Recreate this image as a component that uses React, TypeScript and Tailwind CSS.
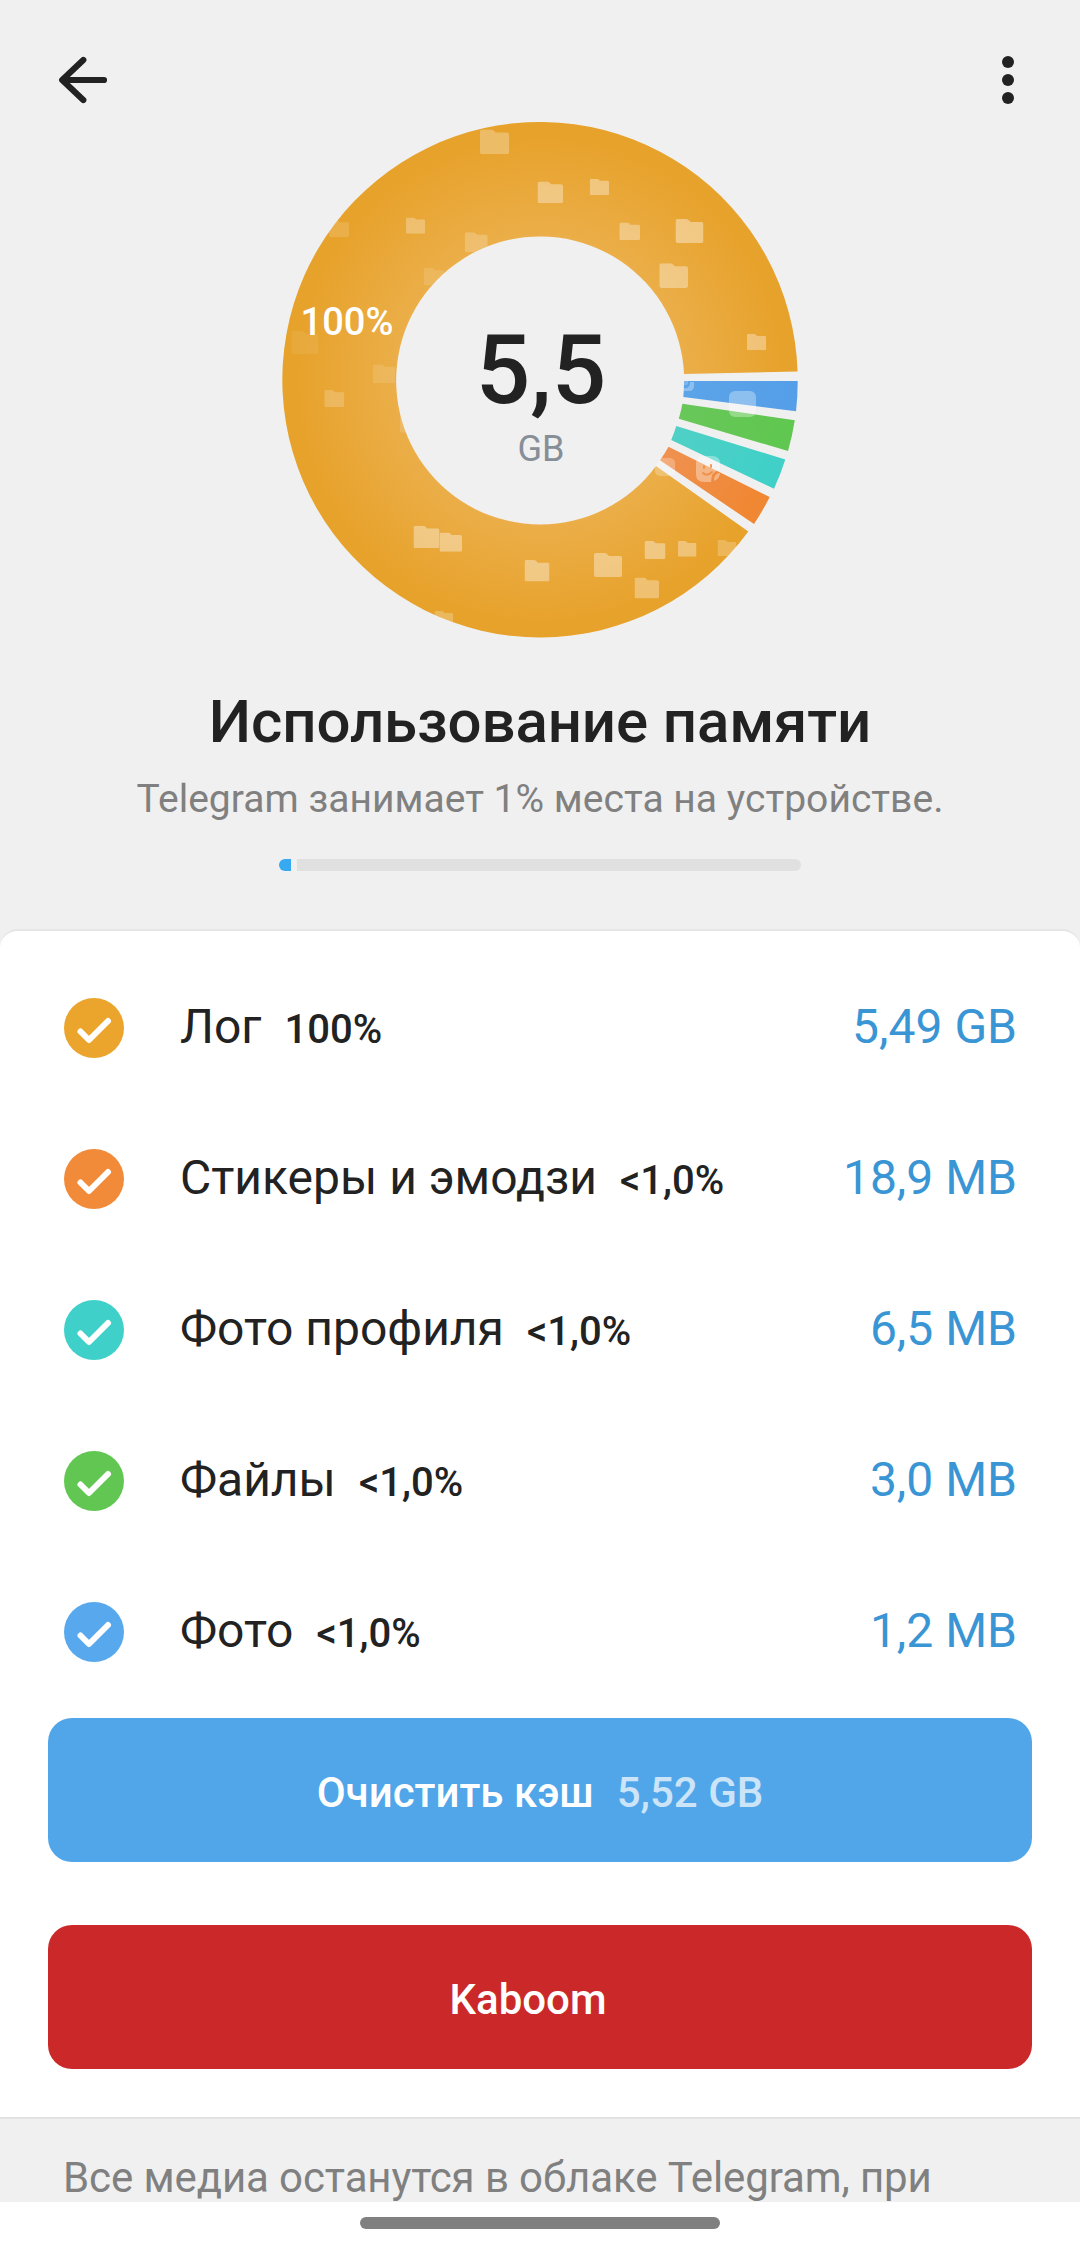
import { useState } from "react";

interface Category {
  id: string;
  title: string;
  percent: string;
  size: string;
  color: string;
}

const categories: Category[] = [
  { id: "log", title: "Лог", percent: "100%", size: "5,49 GB", color: "bg-[#eba52d]" },
  { id: "stickers", title: "Стикеры и эмодзи", percent: "<1,0%", size: "18,9 MB", color: "bg-[#f28b39]" },
  { id: "profile", title: "Фото профиля", percent: "<1,0%", size: "6,5 MB", color: "bg-[#40d0ca]" },
  { id: "files", title: "Файлы", percent: "<1,0%", size: "3,0 MB", color: "bg-[#61c752]" },
  { id: "photos", title: "Фото", percent: "<1,0%", size: "1,2 MB", color: "bg-[#58a8ed]" },
];

const slices = [
  { id: "log", inner: "#ebae48", outer: "#e7a22b", d: "M684 374 L797.6 371.5 A257.7 257.7 0 1 0 748.3 531.5 L656 466 A144 144 0 1 1 684 374 Z" },
  { id: "photos", inner: "#5ca4e8", outer: "#559fe8", d: "M684 381 L797.7 381 A257.7 257.7 0 0 1 796 411.3 L683.3 397 A144 144 0 0 0 684 381 Z" },
  { id: "files", inner: "#69c75a", outer: "#60c750", d: "M682.4 403.8 L794.8 420.3 A258 258 0 0 1 788 451 L678.8 418.7 A144 144 0 0 0 682.4 403.8 Z" },
  { id: "profile", inner: "#50d0c6", outer: "#40d0c8", d: "M676.3 426 L785.3 459.5 A258 258 0 0 1 774 488.8 L671.2 440 A144 144 0 0 0 676.3 426 Z" },
  { id: "stickers", inner: "#ef9150", outer: "#f08733", d: "M668.5 446.7 L769.7 497 A258 258 0 0 1 754 524 L660 460.3 A144 144 0 0 0 668.5 446.7 Z" },
];

// x, y, width, opacity
const folders = [
  [480, 129.5, 29, 0.28],
  [537.5, 181.5, 25.5, 0.36],
  [589.7, 178.7, 19.3, 0.36],
  [406, 217.5, 19, 0.28],
  [329, 220, 20, 0.14],
  [464.7, 232.3, 23, 0.22],
  [424, 268, 20, 0.12],
  [619.3, 222.5, 20.7, 0.34],
  [675.5, 219, 28, 0.4],
  [659.3, 263.3, 28.7, 0.36],
  [747, 334, 19, 0.34],
  [291.5, 331, 27, 0.08],
  [373, 364.5, 22, 0.12],
  [324.3, 390, 20, 0.2],
  [400, 414, 22, 0.14],
  [413.5, 525.7, 26, 0.38],
  [439.5, 532.5, 22.5, 0.38],
  [524.5, 560, 25, 0.38],
  [434.5, 611, 18.5, 0.24],
  [594, 553, 28, 0.38],
  [644.5, 541, 21, 0.38],
  [678, 541, 18.5, 0.34],
  [717.5, 540, 19, 0.22],
  [634.5, 577.5, 24.5, 0.32],
];

function StorageChart() {
  return (
    <svg viewBox="282 122 516 516" className="h-[516px] w-[516px]">
      <defs>
        {slices.map((s) => (
          <radialGradient key={s.id} id={`fill-${s.id}`} gradientUnits="userSpaceOnUse" cx="540" cy="380" r="258">
            <stop offset="0.56" stopColor={s.inner} />
            <stop offset="0.95" stopColor={s.outer} />
          </radialGradient>
        ))}
        <clipPath id="ring">
          <path clipRule="evenodd" d="M282 380a258 258 0 1 0 516 0a258 258 0 1 0 -516 0Z M396 380a144 144 0 1 0 288 0a144 144 0 1 0 -288 0Z" />
        </clipPath>
        <symbol id="folder" viewBox="0 0 28 24">
          <path d="M2 0H10.5Q12 0 13 1L15 3H26Q28 3 28 5V22Q28 24 26 24H2Q0 24 0 22V2Q0 0 2 0Z" fill="#fff" />
        </symbol>
      </defs>

      {slices.map((s) => (
        <path key={s.id} d={s.d} fill={`url(#fill-${s.id})`} />
      ))}

      <g clipPath="url(#ring)">
        {folders.map(([x, y, w, opacity]) => (
          <use key={`${x}-${y}`} href="#folder" x={x} y={y} width={w} height={(w * 24) / 28} opacity={opacity} />
        ))}

        {/* Photo */}
        <rect x="729" y="391" width="27" height="26" rx="6" fill="#fff" opacity="0.32" />
        <path d="M684 388Q690 389 690 382H694V386Q694 391 689 391H684Z" fill="#fff" opacity="0.3" />
        <path d="M684 381H688V384Q687 386 684 385Z" fill="#fff" opacity="0.2" />

        {/* Sticker */}
        <rect x="655" y="458" width="20" height="18" rx="5" fill="#fff" opacity="0.25" />
        <g opacity="0.36" fill="#fff">
          <path d="M704 456H712Q720 456 720 464V470Q711 471 711 482H704Q696 482 696 474V464Q696 456 704 456Z" />
          <path d="M714 481Q714 473 720 473Q720 478 714 481Z" />
        </g>
        <g stroke="#f0914a" strokeWidth="1.8" strokeLinecap="round" fill="none">
          <path d="M703 473Q707 477 712 472" />
          <path d="M704 466V468M711 465V467" />
        </g>
      </g>

      <text x="347" y="335" textAnchor="middle" fill="#fff" className="font-medium text-[38px]">
        100%
      </text>
      <text x="541" y="403" textAnchor="middle" fill="#222" className="font-medium text-[96px]">
        5,5
      </text>
      <text x="541" y="460.5" textAnchor="middle" fill="#868e98" className="text-[36px]">
        GB
      </text>
    </svg>
  );
}

function CategoryRow({ item, checked, onToggle }: { item: Category; checked: boolean; onToggle: () => void }) {
  return (
    <button onClick={onToggle} className="flex h-[151px] w-full items-center pl-16 pr-[63px] text-left">
      <span className={`h-[60px] w-[60px] rounded-full ${item.color}`}>
        {checked && (
          <svg viewBox="0 0 60 60" fill="none" stroke="#fff" strokeWidth="6" strokeLinecap="round" strokeLinejoin="round">
            <path d="M16.5 33.5L25 42L44 23" />
          </svg>
        )}
      </span>
      <span className="ml-14 flex flex-1 items-baseline pt-px text-[48px] leading-[56px]">
        <span className="text-[#222]">{item.title}</span>
        <span className="ml-[23px] text-[40px] font-medium text-[#222]">{item.percent}</span>
        <span className="ml-auto text-[#3a95d5]">{item.size}</span>
      </span>
    </button>
  );
}

export default function App() {
  const [unchecked, setUnchecked] = useState<string[]>([]);

  const toggle = (id: string) => {
    setUnchecked((prev) => (prev.includes(id) ? prev.filter((x) => x !== id) : [...prev, id]));
  };

  return (
    <div className="flex h-[2250px] w-[1080px] flex-col overflow-hidden bg-[#f0f0f0] font-['Roboto',sans-serif]">
      <header className="flex h-[122px] shrink-0 items-start justify-between pl-[57px] pr-[60px] pt-[53px]">
        <button aria-label="Назад">
          <svg width="54" height="54" viewBox="0 0 54 54" fill="none" stroke="#222" strokeWidth="6.2" strokeLinecap="round" strokeLinejoin="round">
            <path d="M47 27H6M26.3 7L5.2 27L26.3 47" />
          </svg>
        </button>
        <button aria-label="Меню">
          <svg width="24" height="54" viewBox="0 0 24 54" fill="#222">
            <circle cx="12" cy="9" r="6" />
            <circle cx="12" cy="27" r="6" />
            <circle cx="12" cy="45" r="6" />
          </svg>
        </button>
      </header>

      <section className="flex h-[807px] shrink-0 flex-col items-center">
        <StorageChart />
        <h1 className="mt-12 text-[60px] font-medium leading-[72px] tracking-[-0.12px] text-[#222]">Использование памяти</h1>
        <p className="mt-[18px] text-[39px] leading-[46px] tracking-[0.02px] text-[#808080]">Telegram занимает 1% места на устройстве.</p>
        <div className="mt-[37px] flex h-3 w-[522px] gap-1.5">
          <div className="w-3 rounded-l-full rounded-r-[3px] bg-[#37a9f0]" />
          <div className="flex-1 rounded-l-[3px] rounded-r-full bg-[#e0e0e0]" />
        </div>
      </section>

      <main className="h-[1188px] shrink-0 rounded-t-[18px] border-t-2 border-[#e5e5e5] bg-white pt-[21px]">
        {categories.map((item) => (
          <CategoryRow key={item.id} item={item} checked={!unchecked.includes(item.id)} onToggle={() => toggle(item.id)} />
        ))}
        <div className="mt-[11px] flex flex-col gap-[63px] px-12">
          <button className="flex h-36 items-center justify-center gap-[23px] rounded-[24px] bg-[#50a6e9] pt-1 text-[42px] font-medium">
            <span className="text-white">Очистить кэш</span>
            <span className="text-[#cbe4f8]">5,52 GB</span>
          </button>
          <button className="flex h-36 items-center justify-center rounded-[24px] bg-[#cb2929] pr-6 pt-1 text-[42px] font-medium text-white">
            Kaboom
          </button>
        </div>
      </main>

      <footer className="h-[85px] shrink-0 overflow-hidden border-t-2 border-[#e2e2e2] px-[63px] pt-[34px] text-[42px] leading-[50px] tracking-[-0.1px] text-[#808080]">
        Все медиа останутся в облаке Telegram, при
      </footer>
      <div className="flex flex-1 justify-center bg-white pt-[15px]">
        <div className="h-3 w-[360px] rounded-full bg-[#808080]" />
      </div>
    </div>
  );
}
